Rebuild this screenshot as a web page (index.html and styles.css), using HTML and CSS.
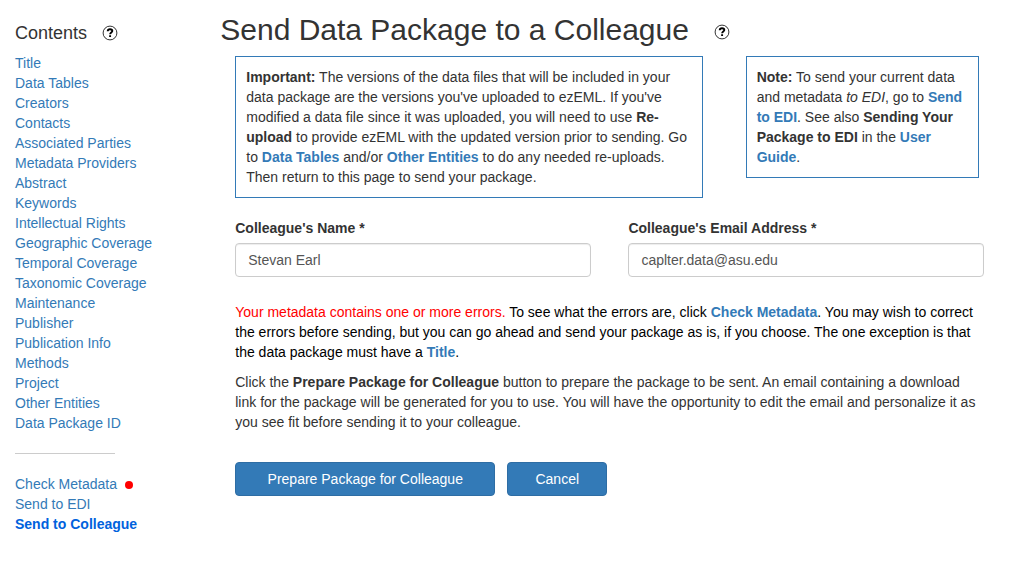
FILE: index.html
```html
<!DOCTYPE html>
<html lang="en">
<head>
<meta charset="utf-8">
<title>Send Data Package to a Colleague</title>
<link rel="stylesheet" href="styles.css">
</head>
<body>
<div class="page">
  <nav class="sidebar">
    <div class="contents">Contents
      <svg class="help" viewBox="0 0 16 16"><circle cx="8" cy="8" r="6.9"/><path d="M5.7 6.3C5.8 4.9 6.7 4.3 8 4.3c1.4 0 2.3.7 2.3 1.8C10.3 7.4 8.2 7.6 8.1 9.2M8.1 10.3v1.8"/></svg>
    </div>
    <a>Title</a><a>Data Tables</a><a>Creators</a><a>Contacts</a><a>Associated Parties</a><a>Metadata Providers</a><a>Abstract</a><a>Keywords</a><a>Intellectual Rights</a><a>Geographic Coverage</a><a>Temporal Coverage</a><a>Taxonomic Coverage</a><a>Maintenance</a><a>Publisher</a><a>Publication Info</a><a>Methods</a><a>Project</a><a>Other Entities</a><a>Data Package ID</a>
    <hr>
    <a>Check Metadata <span class="dot"></span></a><a>Send to EDI</a><a class="current">Send to Colleague</a>
  </nav>
  <main class="main">
    <h1>Send Data Package to a Colleague
      <svg class="help" viewBox="0 0 16 16"><circle cx="8" cy="8" r="6.9"/><path d="M5.7 6.3C5.8 4.9 6.7 4.3 8 4.3c1.4 0 2.3.7 2.3 1.8C10.3 7.4 8.2 7.6 8.1 9.2M8.1 10.3v1.8"/></svg>
    </h1>
    <div class="notes">
      <div class="box important"><b>Important:</b> The versions of the data files that will be included in your<br>data package are the versions you've uploaded to ezEML. If you've<br>modified a data file since it was uploaded, you will need to use <b>Re-<br>upload</b> to provide ezEML with the updated version prior to sending. Go<br>to <a class="strong">Data Tables</a> and/or <a class="strong">Other Entities</a> to do any needed re-uploads.<br>Then return to this page to send your package.</div>
      <div class="box note"><b>Note:</b> To send your current data<br>and metadata <i>to EDI</i>, go to <a class="strong">Send<br>to EDI</a>. See also <b>Sending Your<br>Package to EDI</b> in the <a class="strong">User<br>Guide</a>.</div>
    </div>
    <form class="fields">
      <label>Colleague's Name *<input type="text" value="Stevan Earl"></label>
      <label>Colleague's Email Address *<input type="text" value="caplter.data@asu.edu"></label>
    </form>
    <p class="errors"><span class="red">Your metadata contains one or more errors.</span> To see what the errors are, click <a class="strong">Check Metadata</a>. You may wish to correct<br>the errors before sending, but you can go ahead and send your package as is, if you choose. The one exception is that<br>the data package must have a <a class="strong">Title</a>.</p>
    <p>Click the <b>Prepare Package for Colleague</b> button to prepare the package to be sent. An email containing a download<br>link for the package will be generated for you to use. You will have the opportunity to edit the email and personalize it as<br>you see fit before sending it to your colleague.</p>
    <div class="actions"><button class="prepare">Prepare Package for Colleague</button><button class="cancel">Cancel</button></div>
  </main>
</div>
</body>
</html>
```

FILE: styles.css
```css
* { box-sizing: border-box; }
body { margin: 0; background: #fff; color: #333; font: 14px/20px "Liberation Sans", Arial, sans-serif; }
.page { display: flex; }
.sidebar { flex: none; width: 220.25px; padding: 23px 0 0 15px; }
.sidebar a { display: block; }
a { color: #337ab7; }
.contents { display: flex; align-items: center; gap: 15px; height: 20px; margin-bottom: 10px; font-size: 18px; }
.help { width: 16px; height: 16px; fill: none; stroke: #000; stroke-width: .8; flex: none; }
.help path { stroke-width: 1.9; }
.sidebar hr { width: 100px; height: 1px; margin: 20px 0; border: 0; background: #ccc; }
.dot { display: inline-block; width: 8px; height: 8px; margin-left: 4px; border-radius: 50%; background: #f00; }
.sidebar .current { color: #0062dd; font-weight: bold; }
.main { flex: none; width: 792px; padding-top: 13px; white-space: nowrap; }
h1 { display: flex; align-items: center; gap: 25px; height: 33px; margin: 0 0 10px; font-size: 30px; font-weight: normal; line-height: 33px; }
h1 .help { margin-top: 4px; }
.notes { display: flex; align-items: flex-start; gap: 42.4px; height: 142px; margin-left: 15px; }
.box { border: 1px solid #337ab7; padding: 10px; }
.important { width: 468px; }
.note { width: 233px; }
.strong { font-weight: bold; }
.fields { display: flex; gap: 37.15px; margin: 20px 0 25px 15px; }
.fields label { width: 356px; font-weight: bold; }
input { display: block; width: 100%; height: 34px; margin-top: 5px; padding: 6px 12px; border: 1px solid #ccc; border-radius: 4px; background: #fff; color: #555; font: inherit; font-weight: normal; box-shadow: inset 0 1px 1px rgba(0, 0, 0, .075); }
p { margin: 0 0 10px 15px; }
.errors { color: #000; }
.red { color: #f00; }
.actions { display: flex; gap: 12px; margin: 30px 0 0 15px; }
button { height: 34px; padding: 0; border: 1px solid #2e6da4; border-radius: 4px; background: #337ab7; color: #fff; font: inherit; }
.prepare { width: 260px; }
.cancel { width: 100px; }
```
